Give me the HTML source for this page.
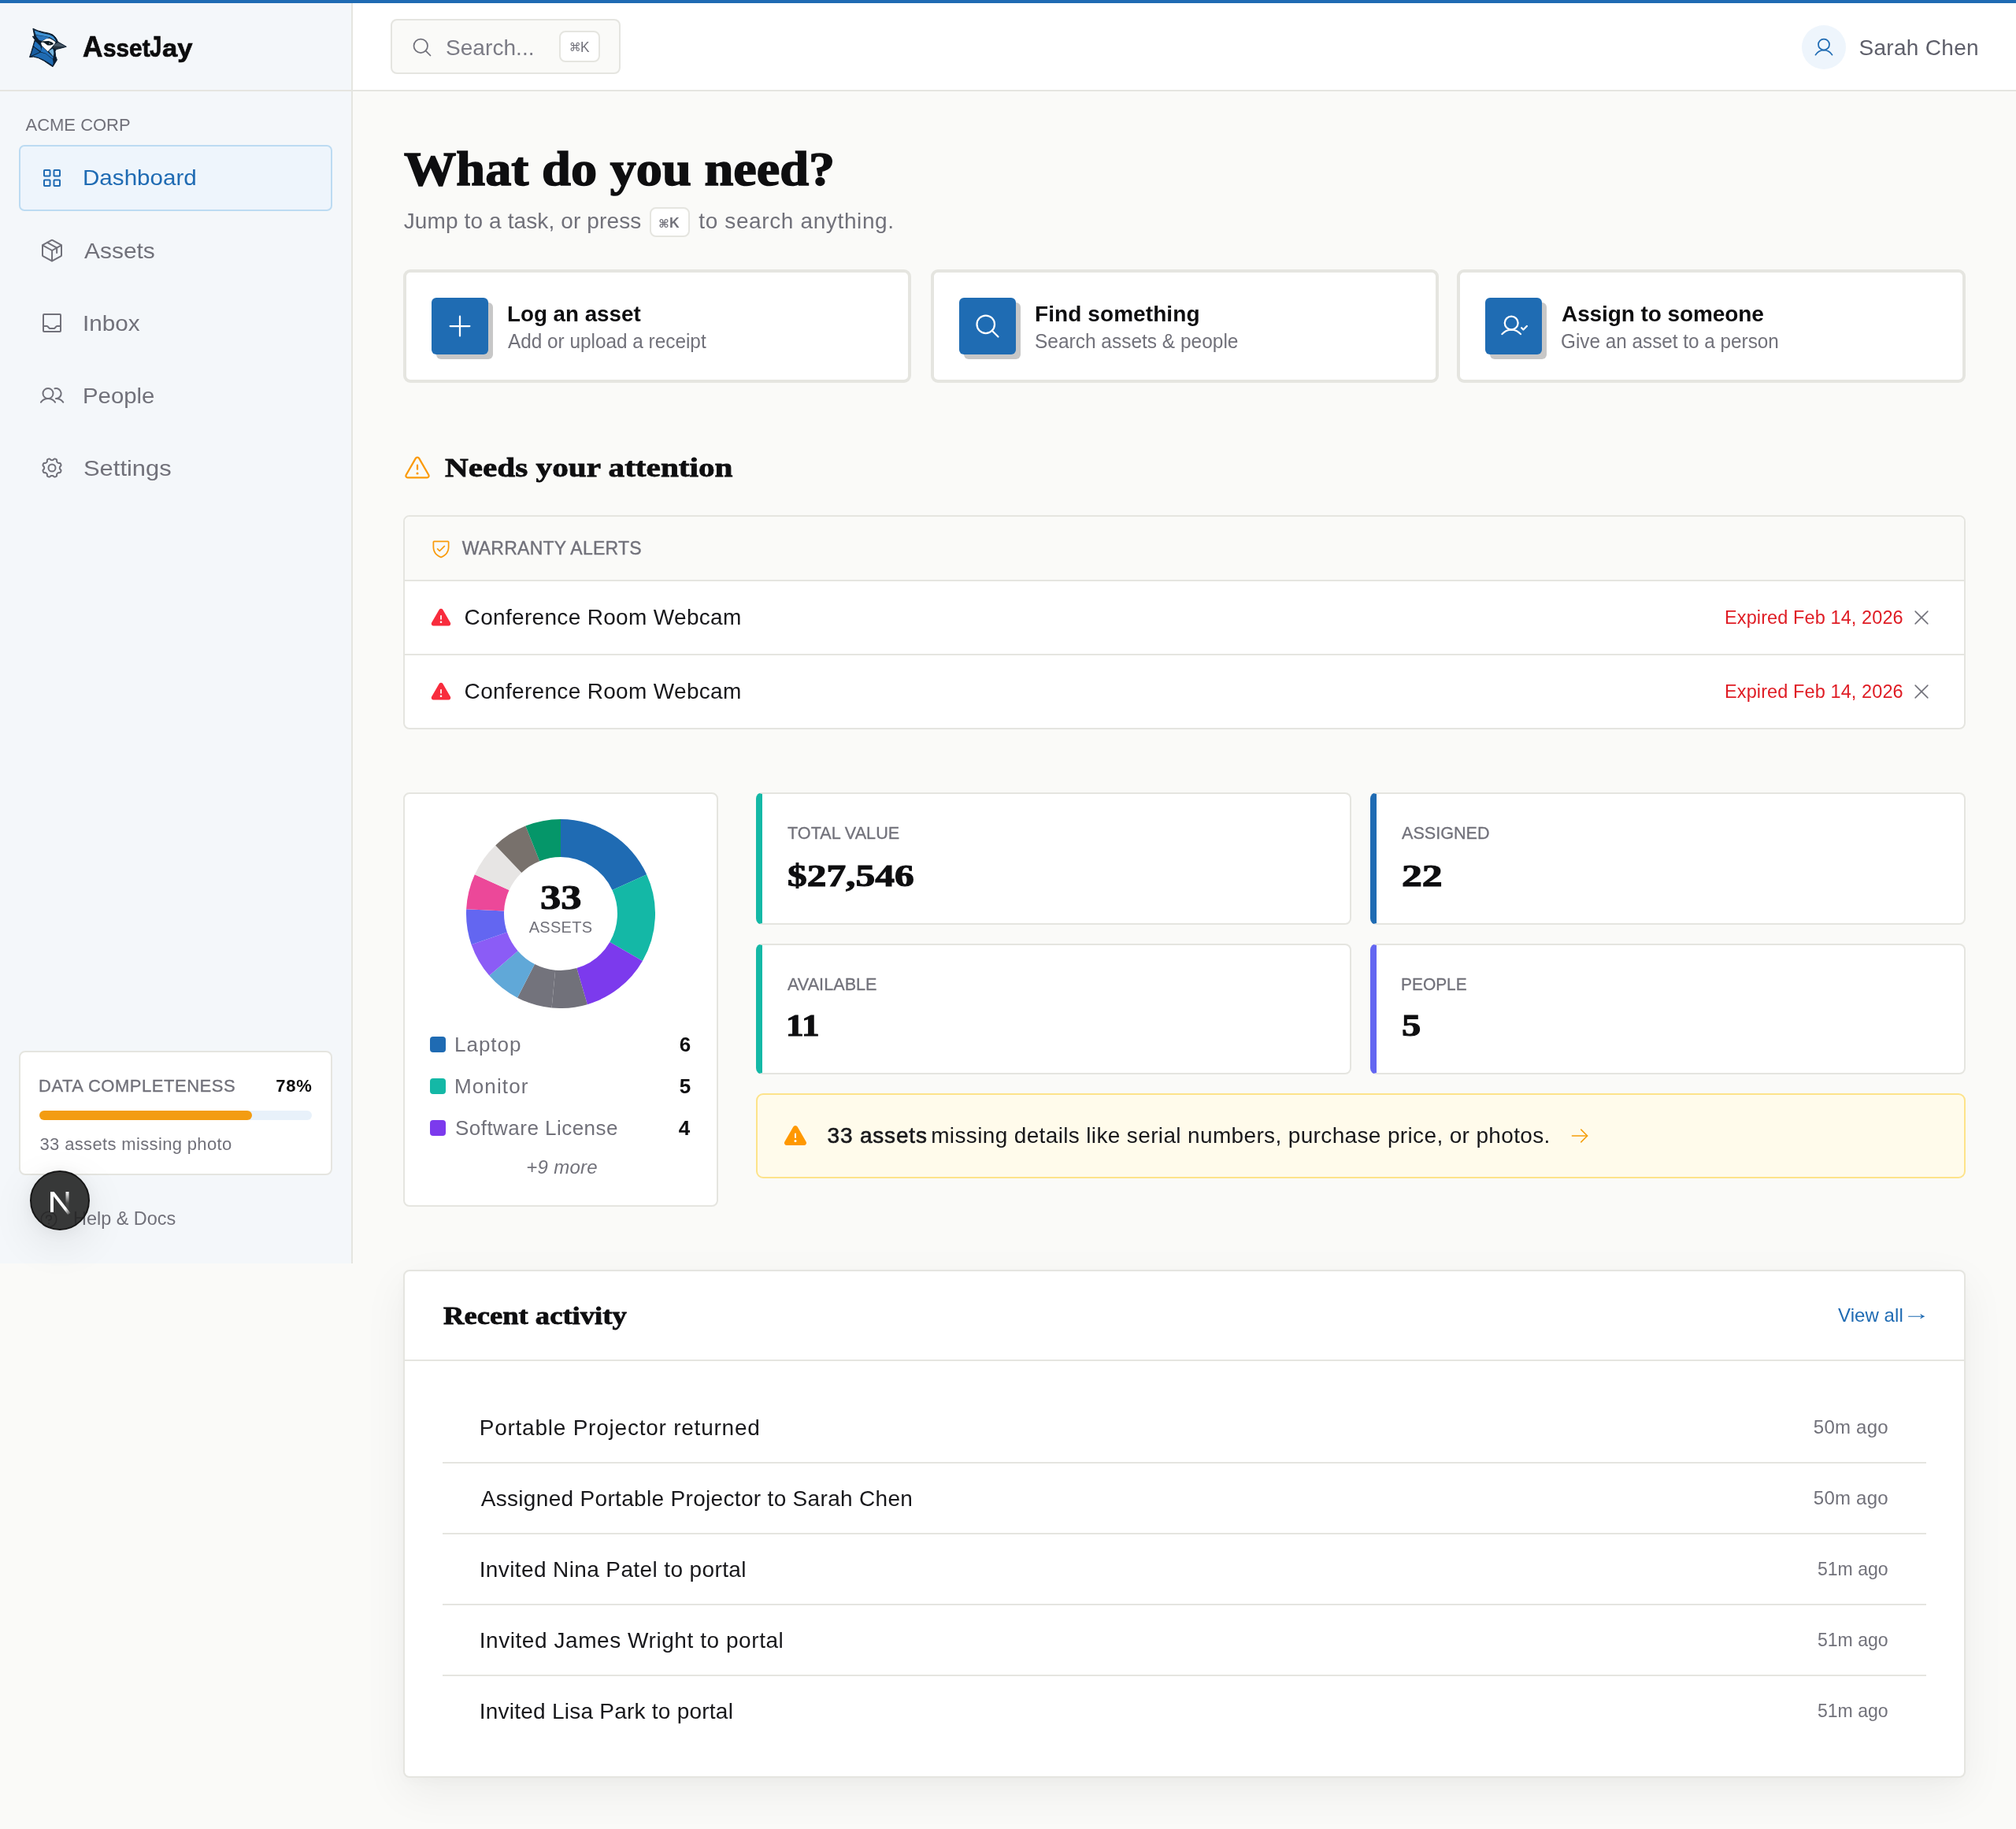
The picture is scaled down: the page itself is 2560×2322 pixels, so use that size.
<!DOCTYPE html>
<html lang="en"><head><meta charset="utf-8"><title>AssetJay – Dashboard</title>
<meta name="viewport" content="width=2560">
<style>
*{box-sizing:border-box;margin:0;padding:0}
html,body{width:2560px;height:2322px;background:#fafaf8;overflow:hidden}
body{font-family:"Liberation Sans", "DejaVu Sans", sans-serif;color:#18181b;-webkit-font-smoothing:antialiased}
#app{position:relative;width:2560px;height:2322px;background:#fafaf8;overflow:hidden;will-change:transform}
#app div,#app span,#app aside,#app header,#app main,#app section,#app nav,#app a,#app h1,#app h2,#app h3,#app p,#app ul,#app li,#app kbd,#app button{position:absolute;display:block}
.t{white-space:nowrap;font-weight:400}
.ic svg{display:block}
.serif{font-family:"Liberation Serif", "DejaVu Serif", serif}
.card{background:#fff;border:2px solid #e5e5e0;border-radius:8px}
.kbd{background:#fff;border:2px solid #e5e5e0;border-radius:8px}
.sq{background:#1f6cb3;border-radius:6px;box-shadow:6px 6px 0 #c7c7c7}
.line{background:#e5e5e0}
.wrap{left:0;top:0;width:0;height:0;overflow:visible}
a{text-decoration:none;color:inherit}
ul{list-style:none}
</style></head>
<body><div id="app">
<div class="topbar" style="left:0;top:0;width:2560px;height:4px;background:#1f6bb3;z-index:5"></div>

<header class="wrap">
<div class="headerbg" style="left:448px;top:0;width:2112px;height:116px;background:#fff;border-bottom:2px solid #e5e5e0"></div>
<div class="search" style="left:496px;top:24px;width:292px;height:70px;background:#fafaf8;border:2px solid #e5e5e0;border-radius:8px"></div>
<span class="ic" style="left:522px;top:46px;width:28px;height:28px"><svg width="28" height="28" viewBox="0 0 256 256" fill="none" stroke="#71717a" stroke-width="16" stroke-linecap="round" stroke-linejoin="round" style="color:#71717a"><circle cx="112" cy="112" r="80"/><line x1="168.6" y1="168.6" x2="224" y2="224"/></svg></span>
<span class="t" style="left:566.00px;top:46.50px;font-size:28px;line-height:28px;letter-spacing:0.059px;color:#7b7b85">Search...</span>
<kbd class="kbd" style="left:710px;top:39px;width:52px;height:40px"></kbd>
<span class="t" style="left:722.75px;top:52.30px;font-size:15px;line-height:15px;color:#71717a">⌘</span><span class="t" style="left:736.89px;top:49.75px;font-size:19px;line-height:19px;color:#71717a;transform:scaleX(0.9125);transform-origin:0 0">K</span>
<div style="left:2288px;top:32px;width:56px;height:56px;border-radius:50%;background:#eef5fc"></div>
<span class="ic" style="left:2302px;top:46px;width:28px;height:28px"><svg width="28" height="28" viewBox="0 0 256 256" fill="none" stroke="#1f6bb3" stroke-width="16" stroke-linecap="round" stroke-linejoin="round" style="color:#1f6bb3"><circle cx="128" cy="96" r="64"/><path d="M32,216c19.4-33.5,54.6-56,96-56s76.6,22.5,96,56"/></svg></span>
<span class="t" style="left:2360.50px;top:46.50px;font-size:28px;line-height:28px;letter-spacing:0.293px;color:#5e5f6a">Sarah Chen</span>
</header>


<aside style="left:0;top:0;width:448px;height:1604px;background:#f4f7fa;border-right:2px solid #e5e5e0">
  <div class="line" style="left:0;top:114px;width:446px;height:2px"></div>
  <span class="ic" style="left:36px;top:35px;width:50px;height:52px"><svg class="bird" width="50" height="52" viewBox="0 0 50 52"><polygon points="5.90,1.19 11.98,3.93 19.71,5.95 25.67,7.14 30.43,8.81 34.00,11.79 36.38,15.36 37.39,18.10 39.95,19.52 48.29,24.29 41.14,26.19 35.31,27.62 34.00,30.24 34.60,36.19 36.38,40.95 31.02,49.76 25.67,46.31 19.71,42.14 12.57,38.57 6.62,37.08 1.56,37.50 3.64,31.43 6.02,23.10 8.29,15.48 5.31,11.19 7.69,11.43 7.39,8.81" fill="#0b1d30" stroke="#0b1d30" stroke-width="1" stroke-linejoin="round"/><polygon points="7.69,3.57 17.33,6.90 26.86,8.93 31.62,11.61 34.71,15.95 35.31,17.62 31.62,14.88 26.86,12.20 19.71,10.71 11.98,9.52 9.12,8.57" fill="#3f92d4"/><polygon points="9.24,9.05 11.98,9.88 19.71,11.07 26.62,12.56 25.07,13.81 20.90,14.88 17.10,16.67 13.76,16.07 10.55,11.90" fill="#2a76bf"/><polygon points="8.64,17.50 10.55,18.69 15.07,23.33 16.26,26.90 15.55,30.00 7.93,24.40 6.98,23.10" fill="#2070ba"/><polygon points="6.62,24.76 14.71,30.95 10.19,33.10 3.17,36.07" fill="#185c9f"/><polygon points="16.50,27.38 17.45,24.05 24.60,31.07 31.62,37.62 31.14,39.88 22.10,32.74 15.79,30.71" fill="#2272be"/><polygon points="3.88,36.67 10.79,33.63 15.55,31.55 22.10,33.33 31.02,40.48 31.62,44.52 31.02,47.98 25.67,44.52 19.71,40.95 12.57,37.74 6.62,36.31" fill="#1f6bb3"/><polygon points="17.10,17.50 22.69,14.29 26.98,13.69 31.14,16.07 34.60,18.45 33.17,21.07 31.14,23.21 29.24,25.60 25.67,29.17 24.60,30.24 17.33,23.21 16.14,20.24" fill="#ffffff"/><polygon points="25.90,29.76 30.55,26.79 31.74,27.98 32.33,32.74 31.62,36.67" fill="#74b3dd"/><polygon points="16.14,17.44 25.67,17.02 29.24,18.21 31.98,19.88 31.14,21.43 28.05,22.38 24.48,22.62 22.10,20.83 19.71,19.05 16.14,18.45" fill="#0c1a22"/><circle cx="26.98" cy="20.12" r="0.7" fill="#fff"/><polygon points="33.29,20.95 37.69,19.05 47.45,24.17 31.98,23.81" fill="#4a5a68"/><polygon points="31.98,23.93 47.45,24.29 35.31,26.90 30.67,26.07" fill="#2a3640"/></svg></span>
  <h2 class="brand" style="left:104px;top:40px;width:150px;height:44px"></h2><span class="t" style="left:104.50px;top:41.50px;font-size:36px;line-height:36px;color:#0c0c0d;font-weight:700;transform:scaleX(0.9808);transform-origin:0 0;-webkit-text-stroke:0.7px #0c0c0d">A</span><span class="t" style="left:131.34px;top:46.00px;font-size:31px;line-height:31px;color:#0c0c0d;font-weight:700;transform:scaleX(0.9601);transform-origin:0 0;-webkit-text-stroke:0.7px #0c0c0d">sset</span><span class="t" style="left:190.20px;top:41.50px;font-size:36px;line-height:36px;color:#0c0c0d;font-weight:700;transform:scaleX(0.7667);transform-origin:0 0;-webkit-text-stroke:0.7px #0c0c0d">J</span><span class="t" style="left:206.25px;top:46.00px;font-size:31px;line-height:31px;color:#0c0c0d;font-weight:700;transform:scaleX(1.1138);transform-origin:0 0;-webkit-text-stroke:0.7px #0c0c0d">ay</span>
  <span class="t" style="left:32.50px;top:147.75px;font-size:22px;line-height:22px;letter-spacing:-0.008px;color:#71717a">ACME CORP</span>
  <nav style="left:0;top:0;width:446px;height:700px"><div class="navactive" style="left:24px;top:184px;width:398px;height:84px;background:#eef5fc;border:2px solid #bcdbf2;border-radius:7px"></div><span class="ic" style="left:50px;top:210px;width:32px;height:32px"><svg width="32" height="32" viewBox="0 0 256 256" fill="none" stroke="#1f6bb3" stroke-width="16" stroke-linecap="round" stroke-linejoin="round" style="color:#1f6bb3"><rect x="48" y="48" width="60" height="60" rx="6"/><rect x="148" y="48" width="60" height="60" rx="6"/><rect x="48" y="148" width="60" height="60" rx="6"/><rect x="148" y="148" width="60" height="60" rx="6"/></svg></span><a class="t" style="left:104.89px;top:212.25px;font-size:28px;line-height:28px;color:#1f6bb3;transform:scaleX(1.0569);transform-origin:0 0">Dashboard</a><span class="ic" style="left:50px;top:302px;width:32px;height:32px"><svg width="32" height="32" viewBox="0 0 256 256" fill="none" stroke="#71717a" stroke-width="16" stroke-linecap="round" stroke-linejoin="round" style="color:#71717a"><path d="M224,177.32V78.68a8,8,0,0,0-4.07-7L132,22.28a8,8,0,0,0-7.84,0L36.07,71.71a8,8,0,0,0-4.07,7v98.64a8,8,0,0,0,4.07,7l88,49.5a8,8,0,0,0,7.84,0l88-49.5A8,8,0,0,0,224,177.32Z"/><polyline points="177 152.5 177 100.5 80 47"/><polyline points="222.9 74.6 129 128 33.1 74.6"/><line x1="129" y1="128" x2="128" y2="234.8"/></svg></span><a class="t" style="left:107.00px;top:304.50px;font-size:28px;line-height:28px;color:#71717a;transform:scaleX(1.0689);transform-origin:0 0">Assets</a><span class="ic" style="left:50px;top:394px;width:32px;height:32px"><svg width="32" height="32" viewBox="0 0 256 256" fill="none" stroke="#71717a" stroke-width="16" stroke-linecap="round" stroke-linejoin="round" style="color:#71717a"><rect x="40" y="40" width="176" height="176" rx="8"/><path d="M40,160H76.7a8,8,0,0,1,5.6,2.3l19.4,19.4a8,8,0,0,0,5.6,2.3h41.4a8,8,0,0,0,5.6-2.3l19.4-19.4a8,8,0,0,1,5.6-2.3H216"/></svg></span><a class="t" style="left:104.88px;top:396.50px;font-size:28px;line-height:28px;color:#71717a;transform:scaleX(1.0602);transform-origin:0 0">Inbox</a><span class="ic" style="left:50px;top:486px;width:32px;height:32px"><svg width="32" height="32" viewBox="0 0 256 256" fill="none" stroke="#71717a" stroke-width="16" stroke-linecap="round" stroke-linejoin="round" style="color:#71717a"><circle cx="88" cy="108" r="52"/><path d="M155.4,57.9A52,52,0,1,1,169.5,160"/><path d="M16,197.4a88,88,0,0,1,144,0"/><path d="M169.5,160a87.9,87.9,0,0,1,72,37.4"/></svg></span><a class="t" style="left:104.90px;top:488.50px;font-size:28px;line-height:28px;color:#71717a;transform:scaleX(1.0489);transform-origin:0 0">People</a><span class="ic" style="left:50px;top:578px;width:32px;height:32px"><svg width="32" height="32" viewBox="0 0 256 256" fill="none" stroke="#71717a" stroke-width="16" stroke-linecap="round" stroke-linejoin="round" style="color:#71717a"><circle cx="128" cy="128" r="36"/><path d="M128.0,49.0 L131.4,49.0 L134.9,48.9 L138.5,48.1 L142.7,44.6 L147.8,38.8 L152.7,35.9 L157.1,35.9 L161.2,36.9 L165.1,38.4 L169.0,40.1 L172.6,42.3 L175.7,45.4 L177.1,50.9 L176.5,58.7 L177.1,64.0 L179.0,67.2 L181.4,69.7 L183.9,72.1 L186.3,74.6 L188.8,77.0 L192.0,78.9 L197.3,79.5 L205.1,78.9 L210.6,80.3 L213.7,83.4 L215.9,87.0 L217.6,90.9 L219.1,94.8 L220.1,98.9 L220.1,103.3 L217.2,108.2 L211.4,113.3 L207.9,117.5 L207.1,121.1 L207.0,124.6 L207.0,128.0 L207.0,131.4 L207.1,134.9 L207.9,138.5 L211.4,142.7 L217.2,147.8 L220.1,152.7 L220.1,157.1 L219.1,161.2 L217.6,165.1 L215.9,169.0 L213.7,172.6 L210.6,175.7 L205.1,177.1 L197.3,176.5 L192.0,177.1 L188.8,179.0 L186.3,181.4 L183.9,183.9 L181.4,186.3 L179.0,188.8 L177.1,192.0 L176.5,197.3 L177.1,205.1 L175.7,210.6 L172.6,213.7 L169.0,215.9 L165.1,217.6 L161.2,219.1 L157.1,220.1 L152.7,220.1 L147.8,217.2 L142.7,211.4 L138.5,207.9 L134.9,207.1 L131.4,207.0 L128.0,207.0 L124.6,207.0 L121.1,207.1 L117.5,207.9 L113.3,211.4 L108.2,217.2 L103.3,220.1 L98.9,220.1 L94.8,219.1 L90.9,217.6 L87.0,215.9 L83.4,213.7 L80.3,210.6 L78.9,205.1 L79.5,197.3 L78.9,192.0 L77.0,188.8 L74.6,186.3 L72.1,183.9 L69.7,181.4 L67.2,179.0 L64.0,177.1 L58.7,176.5 L50.9,177.1 L45.4,175.7 L42.3,172.6 L40.1,169.0 L38.4,165.1 L36.9,161.2 L35.9,157.1 L35.9,152.7 L38.8,147.8 L44.6,142.7 L48.1,138.5 L48.9,134.9 L49.0,131.4 L49.0,128.0 L49.0,124.6 L48.9,121.1 L48.1,117.5 L44.6,113.3 L38.8,108.2 L35.9,103.3 L35.9,98.9 L36.9,94.8 L38.4,90.9 L40.1,87.0 L42.3,83.4 L45.4,80.3 L50.9,78.9 L58.7,79.5 L64.0,78.9 L67.2,77.0 L69.7,74.6 L72.1,72.1 L74.6,69.7 L77.0,67.2 L78.9,64.0 L79.5,58.7 L78.9,50.9 L80.3,45.4 L83.4,42.3 L87.0,40.1 L90.9,38.4 L94.8,36.9 L98.9,35.9 L103.3,35.9 L108.2,38.8 L113.3,44.6 L117.5,48.1 L121.1,48.9 L124.6,49.0Z"/></svg></span><a class="t" style="left:105.90px;top:580.50px;font-size:28px;line-height:28px;color:#71717a;transform:scaleX(1.1041);transform-origin:0 0">Settings</a></nav>
  <section class="card" style="left:24px;top:1334px;width:398px;height:158px"></section>
  <span class="t" style="left:49.00px;top:1367.50px;font-size:22px;line-height:22px;letter-spacing:0.526px;color:#71717a;-webkit-text-stroke:0.35px #71717a">DATA COMPLETENESS</span>
  <span class="t" style="left:350.30px;top:1367.50px;font-size:22px;line-height:22px;letter-spacing:0.715px;color:#0c0c0d;font-weight:700">78%</span>
  <div style="left:50px;top:1410px;width:346px;height:12px;border-radius:6px;background:#e8f1fa"><div style="left:0;top:0;width:270px;height:12px;border-radius:6px;background:#f39c12"></div></div>
  <span class="t" style="left:50.50px;top:1441.50px;font-size:22px;line-height:22px;letter-spacing:0.351px;color:#71717a">33 assets missing photo</span>
  <span class="ic" style="left:49px;top:1535px;width:26px;height:26px"><svg width="26" height="26" viewBox="0 0 256 256" fill="none" stroke="#71717a" stroke-width="16" stroke-linecap="round" stroke-linejoin="round" style="color:#71717a"><circle cx="128" cy="128" r="96"/><circle cx="128" cy="180" r="11" fill="currentColor" stroke="none"/><path d="M128,144v-8c17.7,0,32-12.5,32-28s-14.3-28-32-28S96,92.5,96,108v4"/></svg></span>
  <a class="t" style="left:92.52px;top:1534.50px;font-size:24px;line-height:24px;color:#71717a;transform:scaleX(0.9767);transform-origin:0 0">Help &amp; Docs</a>
</aside>
<div class="nbadge" role="img" aria-label="Next.js dev tools" style="left:38px;top:1486px;width:76px;height:76px;border-radius:50%;background:rgba(34,34,34,.9);border:2px solid #161616;box-shadow:0 16px 56px rgba(0,0,0,.09),0 2px 20px rgba(0,0,0,.05)">
  <svg width="72" height="72" viewBox="0 0 72 72" style="position:absolute;left:0;top:0">
   <defs><linearGradient id="ng1" x1="0" y1="0" x2="0" y2="1"><stop offset="0" stop-color="#fff"/><stop offset=".55" stop-color="#fff" stop-opacity=".1"/><stop offset="1" stop-color="#fff" stop-opacity="0"/></linearGradient>
   <linearGradient id="ng2" x1="0" y1="0" x2="1" y2="1"><stop offset="0" stop-color="#fff"/><stop offset=".75" stop-color="#fff"/><stop offset="1" stop-color="#fff" stop-opacity="0"/></linearGradient></defs>
   <rect x="43.5" y="25" width="4" height="26" fill="url(#ng1)"/>
   <path d="M24 25 h4.6 L49.5 52 l-3.4 2 L28 30.8 V51 h-4z" fill="url(#ng2)"/>
  </svg>
</div>

<main class="wrap">
<h1 class="t  serif" style="left:513.30px;top:183.50px;font-size:61px;line-height:61px;color:#0e0e10;font-weight:700;transform:scaleX(1.0871);transform-origin:0 0;-webkit-text-stroke:1.5px #0e0e10">What do you need?</h1>
<p class="t" style="left:512.70px;top:266.50px;font-size:28px;line-height:28px;letter-spacing:0.122px;color:#71717a">Jump to a task, or press</p>
<kbd class="kbd" style="left:825px;top:263px;width:51px;height:38px"></kbd>
<span class="t" style="left:836.30px;top:276.55px;font-size:14.5px;line-height:14.5px;color:#71717a;font-weight:700">⌘</span>
<span class="t" style="left:849.62px;top:274.30px;font-size:18px;line-height:18px;color:#71717a;font-weight:700;transform:scaleX(0.9750);transform-origin:0 0">K</span>
<p class="t" style="left:887.30px;top:266.50px;font-size:28px;line-height:28px;letter-spacing:0.622px;color:#71717a">to search anything.</p>
<a class="action" style="left:512px;top:342px;width:645.33px;height:144px;background:#fff;border:4px solid #e5e5e0;border-radius:9px"></a>
<div class="sq" style="left:548.00px;top:378px;width:72px;height:72px"></div>
<span class="ic" style="left:566px;top:396px;width:36px;height:36px"><svg width="36" height="36" viewBox="0 0 256 256" fill="none" stroke="#fff" stroke-width="16" stroke-linecap="round" stroke-linejoin="round" style="color:#fff"><line x1="40" y1="128" x2="216" y2="128"/><line x1="128" y1="40" x2="128" y2="216"/></svg></span>
<h3 class="t" style="left:644.01px;top:384.80px;font-size:28px;line-height:28px;color:#0e0e10;font-weight:700;transform:scaleX(0.9910);transform-origin:0 0">Log an asset</h3>
<p class="t" style="left:645.00px;top:420.80px;font-size:25px;line-height:25px;color:#71717a;transform:scaleX(0.9735);transform-origin:0 0">Add or upload a receipt</p>
<a class="action" style="left:1182px;top:342px;width:645.33px;height:144px;background:#fff;border:4px solid #e5e5e0;border-radius:9px"></a>
<div class="sq" style="left:1218.00px;top:378px;width:72px;height:72px"></div>
<span class="ic" style="left:1236px;top:396px;width:36px;height:36px"><svg width="36" height="36" viewBox="0 0 256 256" fill="none" stroke="#fff" stroke-width="16" stroke-linecap="round" stroke-linejoin="round" style="color:#fff"><circle cx="112" cy="112" r="80"/><line x1="168.6" y1="168.6" x2="224" y2="224"/></svg></span>
<h3 class="t" style="left:1314.00px;top:384.80px;font-size:28px;line-height:28px;letter-spacing:0.083px;color:#0e0e10;font-weight:700">Find something</h3>
<p class="t" style="left:1314.02px;top:420.80px;font-size:25px;line-height:25px;color:#71717a;transform:scaleX(0.9788);transform-origin:0 0">Search assets &amp; people</p>
<a class="action" style="left:1850px;top:342px;width:646px;height:144px;background:#fff;border:4px solid #e5e5e0;border-radius:9px"></a>
<div class="sq" style="left:1886.00px;top:378px;width:72px;height:72px"></div>
<span class="ic" style="left:1904px;top:396px;width:36px;height:36px"><svg width="36" height="36" viewBox="0 0 256 256" fill="none" stroke="#fff" stroke-width="16" stroke-linecap="round" stroke-linejoin="round" style="color:#fff"><circle cx="108" cy="100" r="60"/><path d="M24,200c20.6-24.5,49.6-40,84-40s63.4,15.5,84,40"/><polyline points="200 144 216 160 248 128"/></svg></span>
<h3 class="t" style="left:1983.00px;top:384.80px;font-size:28px;line-height:28px;letter-spacing:-0.093px;color:#0e0e10;font-weight:700">Assign to someone</h3>
<p class="t" style="left:1982.03px;top:420.80px;font-size:25px;line-height:25px;color:#71717a;transform:scaleX(0.9718);transform-origin:0 0">Give an asset to a person</p>
<span class="ic" style="left:512px;top:576px;width:36px;height:36px"><svg width="36" height="36" viewBox="0 0 256 256" fill="none" stroke="#fb9a09" stroke-width="16" stroke-linecap="round" stroke-linejoin="round" style="color:#fb9a09"><path d="M142.4,40.2l87.5,151.9C236,202.8,228.1,216,215.5,216H40.5C27.9,216,20,202.8,26.1,192.1L113.6,40.2C119.9,29.3,136.1,29.3,142.4,40.2Z"/><line x1="128" y1="140" x2="128" y2="104"/><circle cx="128" cy="178" r="11" fill="currentColor" stroke="none"/></svg></span>
<h2 class="t  serif" style="left:565.00px;top:576.45px;font-size:34.5px;line-height:34.5px;color:#0e0e10;font-weight:700;transform:scaleX(1.1943);transform-origin:0 0;-webkit-text-stroke:0.8px #0e0e10">Needs your attention</h2>
<section class="card" style="left:512px;top:654px;width:1984px;height:272px;overflow:hidden"><div style="left:0;top:0;width:1980px;height:80px;background:#fafaf8"></div><div class="line" style="left:0;top:80px;width:1980px;height:2px"></div><div class="line" style="left:0;top:174px;width:1980px;height:2px"></div></section>
<span class="ic" style="left:545.5px;top:682px;width:28px;height:28px"><svg width="28" height="28" viewBox="0 0 256 256" fill="none" stroke="#f99b0c" stroke-width="16" stroke-linecap="round" stroke-linejoin="round" style="color:#f99b0c"><path d="M40,114.8V56a8,8,0,0,1,8-8H208a8,8,0,0,1,8,8v58.8c0,84.2-71.3,112.1-85.5,116.8a7.5,7.5,0,0,1-4.9,0C111.3,226.9,40,199,40,114.8Z"/><polyline points="88 136 112 160 168 104"/></svg></span>
<h3 class="t" style="left:586.70px;top:684.50px;font-size:23px;line-height:23px;letter-spacing:0.245px;color:#71717a;-webkit-text-stroke:0.4px #71717a">WARRANTY ALERTS</h3>
<span class="ic" style="left:546px;top:770px;width:28px;height:28px"><svg width="28" height="28" viewBox="0 0 256 256"><path fill="#f82c3d" d="M236.8,188.1,149.4,36.9a24.8,24.8,0,0,0-42.8,0L19.2,188.1a23.5,23.5,0,0,0,0,23.7A24.4,24.4,0,0,0,40.6,224H215.4a24.4,24.4,0,0,0,21.4-12.2A23.5,23.5,0,0,0,236.8,188.1Z"/><rect x="120" y="100" width="16" height="52" rx="8" fill="#fff"/><circle cx="128" cy="180" r="12" fill="#fff"/></svg></span>
<p class="t" style="left:589.60px;top:770.30px;font-size:28px;line-height:28px;letter-spacing:0.322px;color:#18181b">Conference Room Webcam</p>
<span class="t" style="left:2190.00px;top:772.75px;font-size:23.5px;line-height:23.5px;letter-spacing:0.103px;color:#df1c24">Expired Feb 14, 2026</span>
<span class="ic" style="left:2426px;top:770px;width:28px;height:28px"><svg width="28" height="28" viewBox="0 0 256 256" fill="none" stroke="#71717a" stroke-width="14" stroke-linecap="round" stroke-linejoin="round" style="color:#71717a"><line x1="200" y1="56" x2="56" y2="200"/><line x1="200" y1="200" x2="56" y2="56"/></svg></span>
<span class="ic" style="left:546px;top:864px;width:28px;height:28px"><svg width="28" height="28" viewBox="0 0 256 256"><path fill="#f82c3d" d="M236.8,188.1,149.4,36.9a24.8,24.8,0,0,0-42.8,0L19.2,188.1a23.5,23.5,0,0,0,0,23.7A24.4,24.4,0,0,0,40.6,224H215.4a24.4,24.4,0,0,0,21.4-12.2A23.5,23.5,0,0,0,236.8,188.1Z"/><rect x="120" y="100" width="16" height="52" rx="8" fill="#fff"/><circle cx="128" cy="180" r="12" fill="#fff"/></svg></span>
<p class="t" style="left:589.60px;top:864.30px;font-size:28px;line-height:28px;letter-spacing:0.322px;color:#18181b">Conference Room Webcam</p>
<span class="t" style="left:2190.00px;top:866.75px;font-size:23.5px;line-height:23.5px;letter-spacing:0.103px;color:#df1c24">Expired Feb 14, 2026</span>
<span class="ic" style="left:2426px;top:864px;width:28px;height:28px"><svg width="28" height="28" viewBox="0 0 256 256" fill="none" stroke="#71717a" stroke-width="14" stroke-linecap="round" stroke-linejoin="round" style="color:#71717a"><line x1="200" y1="56" x2="56" y2="200"/><line x1="200" y1="200" x2="56" y2="56"/></svg></span>
<section class="card" style="left:512px;top:1006px;width:400px;height:525.5px"></section>
<span class="ic" style="left:592px;top:1039.7px;width:240px;height:240px"><svg width="240" height="240" viewBox="0 0 240 240"><path d="M120.00,0.00 A120,120 0 0 1 229.16,70.15 L185.49,90.09 A72,72 0 0 0 120.00,48.00Z" fill="#1f6bb3"/><path d="M229.16,70.15 A120,120 0 0 1 223.92,180.00 L182.35,156.00 A72,72 0 0 0 185.49,90.09Z" fill="#14b8a6"/><path d="M223.92,180.00 A120,120 0 0 1 153.81,235.14 L140.28,189.08 A72,72 0 0 0 182.35,156.00Z" fill="#7c3aed"/><path d="M153.81,235.14 A120,120 0 0 1 108.59,239.46 L113.16,191.67 A72,72 0 0 0 140.28,189.08Z" fill="#71717a"/><path d="M108.59,239.46 A120,120 0 0 1 65.01,226.66 L87.01,184.00 A72,72 0 0 0 113.16,191.67Z" fill="#73737c"/><path d="M65.01,226.66 A120,120 0 0 1 29.31,198.58 L65.59,167.15 A72,72 0 0 0 87.01,184.00Z" fill="#60a8d8"/><path d="M29.31,198.58 A120,120 0 0 1 6.60,159.25 L51.96,143.55 A72,72 0 0 0 65.59,167.15Z" fill="#8b5cf6"/><path d="M6.60,159.25 A120,120 0 0 1 0.14,114.29 L48.08,116.57 A72,72 0 0 0 51.96,143.55Z" fill="#6366f1"/><path d="M0.14,114.29 A120,120 0 0 1 10.84,70.15 L54.51,90.09 A72,72 0 0 0 48.08,116.57Z" fill="#ec4899"/><path d="M10.84,70.15 A120,120 0 0 1 37.19,33.15 L70.31,67.89 A72,72 0 0 0 54.51,90.09Z" fill="#e7e5e4"/><path d="M37.19,33.15 A120,120 0 0 1 75.40,8.60 L93.24,53.16 A72,72 0 0 0 70.31,67.89Z" fill="#78716c"/><path d="M75.40,8.60 A120,120 0 0 1 120.00,0.00 L120.00,48.00 A72,72 0 0 0 93.24,53.16Z" fill="#059669"/></svg></span>
<span class="t  serif" style="left:686.11px;top:1117.80px;font-size:44px;line-height:44px;color:#0e0e10;font-weight:700;transform:scaleX(1.1905);transform-origin:0 0;-webkit-text-stroke:1.1px #0e0e10">33</span>
<span class="t" style="left:671.70px;top:1167.00px;font-size:20px;line-height:20px;letter-spacing:0.285px;color:#71717a">ASSETS</span>
<span style="left:546px;top:1316px;width:20px;height:20px;border-radius:4px;background:#1f6bb3"></span>
<span class="t" style="left:577.00px;top:1313.00px;font-size:26px;line-height:26px;letter-spacing:0.987px;color:#71717a">Laptop</span>
<span class="t" style="left:862.70px;top:1313.00px;font-size:26px;line-height:26px;color:#0e0e10;font-weight:700">6</span>
<span style="left:546px;top:1369px;width:20px;height:20px;border-radius:4px;background:#14b8a6"></span>
<span class="t" style="left:577.00px;top:1366.00px;font-size:26px;line-height:26px;letter-spacing:1.110px;color:#71717a">Monitor</span>
<span class="t" style="left:862.70px;top:1366.00px;font-size:26px;line-height:26px;color:#0e0e10;font-weight:700">5</span>
<span style="left:546px;top:1422px;width:20px;height:20px;border-radius:4px;background:#7c3aed"></span>
<span class="t" style="left:578.00px;top:1419.00px;font-size:26px;line-height:26px;letter-spacing:0.468px;color:#71717a">Software License</span>
<span class="t" style="left:861.70px;top:1419.00px;font-size:26px;line-height:26px;color:#0e0e10;font-weight:700">4</span>
<span class="t" style="left:668.30px;top:1469.50px;font-size:24px;line-height:24px;letter-spacing:0.273px;color:#71717a;font-style:italic">+9 more</span>
<section class="card" style="left:960px;top:1006px;width:756px;height:168px;border-left:8px solid #14b8a6"></section>
<span class="t" style="left:1000.40px;top:1047.40px;font-size:22px;line-height:22px;color:#71717a;transform:scaleX(0.9826);transform-origin:0 0;-webkit-text-stroke:0.3px #71717a">TOTAL VALUE</span>
<span class="t  serif" style="left:1000.35px;top:1092.85px;font-size:39.5px;line-height:39.5px;color:#0e0e10;font-weight:700;transform:scaleX(1.2509);transform-origin:0 0;-webkit-text-stroke:1.1px #0e0e10">$27,546</span>
<section class="card" style="left:1740px;top:1006px;width:756px;height:168px;border-left:8px solid #1f6bb3"></section>
<span class="t" style="left:1780.40px;top:1047.40px;font-size:22px;line-height:22px;color:#71717a;transform:scaleX(0.9813);transform-origin:0 0;-webkit-text-stroke:0.3px #71717a">ASSIGNED</span>
<span class="t  serif" style="left:1780.29px;top:1092.85px;font-size:39.5px;line-height:39.5px;color:#0e0e10;font-weight:700;transform:scaleX(1.3086);transform-origin:0 0;-webkit-text-stroke:1.1px #0e0e10">22</span>
<section class="card" style="left:960px;top:1198px;width:756px;height:166px;border-left:8px solid #14b8a6"></section>
<span class="t" style="left:1000.40px;top:1239.40px;font-size:22px;line-height:22px;color:#71717a;transform:scaleX(0.9844);transform-origin:0 0;-webkit-text-stroke:0.3px #71717a">AVAILABLE</span>
<span class="t  serif" style="left:998.17px;top:1283.25px;font-size:39.5px;line-height:39.5px;color:#0e0e10;font-weight:700;transform:scaleX(1.1421);transform-origin:0 0;-webkit-text-stroke:1.1px #0e0e10">11</span>
<section class="card" style="left:1740px;top:1198px;width:756px;height:166px;border-left:8px solid #6366f1"></section>
<span class="t" style="left:1779.45px;top:1239.40px;font-size:22px;line-height:22px;color:#71717a;transform:scaleX(0.9506);transform-origin:0 0;-webkit-text-stroke:0.3px #71717a">PEOPLE</span>
<span class="t  serif" style="left:1780.37px;top:1283.25px;font-size:39.5px;line-height:39.5px;color:#0e0e10;font-weight:700;transform:scaleX(1.2278);transform-origin:0 0;-webkit-text-stroke:1.1px #0e0e10">5</span>
<a class="banner" style="left:960px;top:1388px;width:1536px;height:108px;background:#fffbeb;border:2px solid #fde38a;border-radius:9px"></a>
<span class="ic" style="left:994px;top:1426px;width:32px;height:32px"><svg width="32" height="32" viewBox="0 0 256 256"><path fill="#ff9800" d="M236.8,188.1,149.4,36.9a24.8,24.8,0,0,0-42.8,0L19.2,188.1a23.5,23.5,0,0,0,0,23.7A24.4,24.4,0,0,0,40.6,224H215.4a24.4,24.4,0,0,0,21.4-12.2A23.5,23.5,0,0,0,236.8,188.1Z"/><rect x="120" y="100" width="16" height="52" rx="8" fill="#fff"/><circle cx="128" cy="180" r="12" fill="#fff"/></svg></span>
<span class="t" style="left:1050.60px;top:1428.40px;font-size:28px;line-height:28px;letter-spacing:0.807px;color:#18181b;-webkit-text-stroke:0.6px #18181b">33 assets</span>
<span class="t" style="left:1182.20px;top:1428.40px;font-size:28px;line-height:28px;letter-spacing:0.356px;color:#18181b">missing details like serial numbers, purchase price, or photos.</span>
<span class="ic" style="left:1992px;top:1428px;width:28px;height:28px"><svg width="28" height="28" viewBox="0 0 256 256" fill="none" stroke="#f59e0b" stroke-width="14" stroke-linecap="round" stroke-linejoin="round" style="color:#f59e0b"><line x1="40" y1="128" x2="216" y2="128"/><polyline points="144 56 216 128 144 200"/></svg></span>
<section class="card" style="left:512px;top:1612px;width:1984px;height:645px;box-shadow:0 18px 56px rgba(0,0,0,.06),0 4px 14px rgba(0,0,0,.02)"><div class="line" style="left:0;top:112px;width:1980px;height:2px"></div></section>
<h2 class="t  serif" style="left:563.30px;top:1653.80px;font-size:32px;line-height:32px;color:#0e0e10;font-weight:700;transform:scaleX(1.1437);transform-origin:0 0;-webkit-text-stroke:0.8px #0e0e10">Recent activity</h2>
<a class="t" style="left:2334.00px;top:1657.50px;font-size:24px;line-height:24px;letter-spacing:0.067px;color:#1f6bb3">View all</a>
<span class="t" style="left:2416.15px;top:1655.10px;font-size:24px;line-height:24px;color:#1f6bb3;transform:scaleX(1.4625);transform-origin:0 0">→</span>
<p class="t" style="left:608.70px;top:1798.80px;font-size:28px;line-height:28px;letter-spacing:0.769px;color:#18181b">Portable Projector returned</p>
<span class="t" style="left:2302.80px;top:1800.00px;font-size:24px;line-height:24px;letter-spacing:0.242px;color:#71717a">50m ago</span>
<div class="line" style="left:562px;top:1856px;width:1884px;height:2px"></div>
<p class="t" style="left:610.70px;top:1888.80px;font-size:28px;line-height:28px;letter-spacing:0.321px;color:#18181b">Assigned Portable Projector to Sarah Chen</p>
<span class="t" style="left:2302.80px;top:1890.00px;font-size:24px;line-height:24px;letter-spacing:0.242px;color:#71717a">50m ago</span>
<div class="line" style="left:562px;top:1946px;width:1884px;height:2px"></div>
<p class="t" style="left:608.70px;top:1978.80px;font-size:28px;line-height:28px;letter-spacing:0.386px;color:#18181b">Invited Nina Patel to portal</p>
<span class="t" style="left:2308.00px;top:1980.00px;font-size:24px;line-height:24px;color:#71717a;transform:scaleX(0.9597);transform-origin:0 0">51m ago</span>
<div class="line" style="left:562px;top:2036px;width:1884px;height:2px"></div>
<p class="t" style="left:608.70px;top:2068.80px;font-size:28px;line-height:28px;letter-spacing:0.561px;color:#18181b">Invited James Wright to portal</p>
<span class="t" style="left:2308.00px;top:2070.00px;font-size:24px;line-height:24px;color:#71717a;transform:scaleX(0.9597);transform-origin:0 0">51m ago</span>
<div class="line" style="left:562px;top:2126px;width:1884px;height:2px"></div>
<p class="t" style="left:608.70px;top:2158.80px;font-size:28px;line-height:28px;letter-spacing:0.241px;color:#18181b">Invited Lisa Park to portal</p>
<span class="t" style="left:2308.00px;top:2160.00px;font-size:24px;line-height:24px;color:#71717a;transform:scaleX(0.9597);transform-origin:0 0">51m ago</span>
</main>
</div>
<script>(function(){var w=window.innerWidth,a=document.getElementById('app');if(w&&Math.abs(w-2560)>1){a.style.transformOrigin='0 0';a.style.transform='scale('+(w/2560)+')';document.documentElement.style.width=document.body.style.width=w+'px';document.documentElement.style.height=document.body.style.height=(2322*w/2560)+'px';}})();</script>
</body></html>
